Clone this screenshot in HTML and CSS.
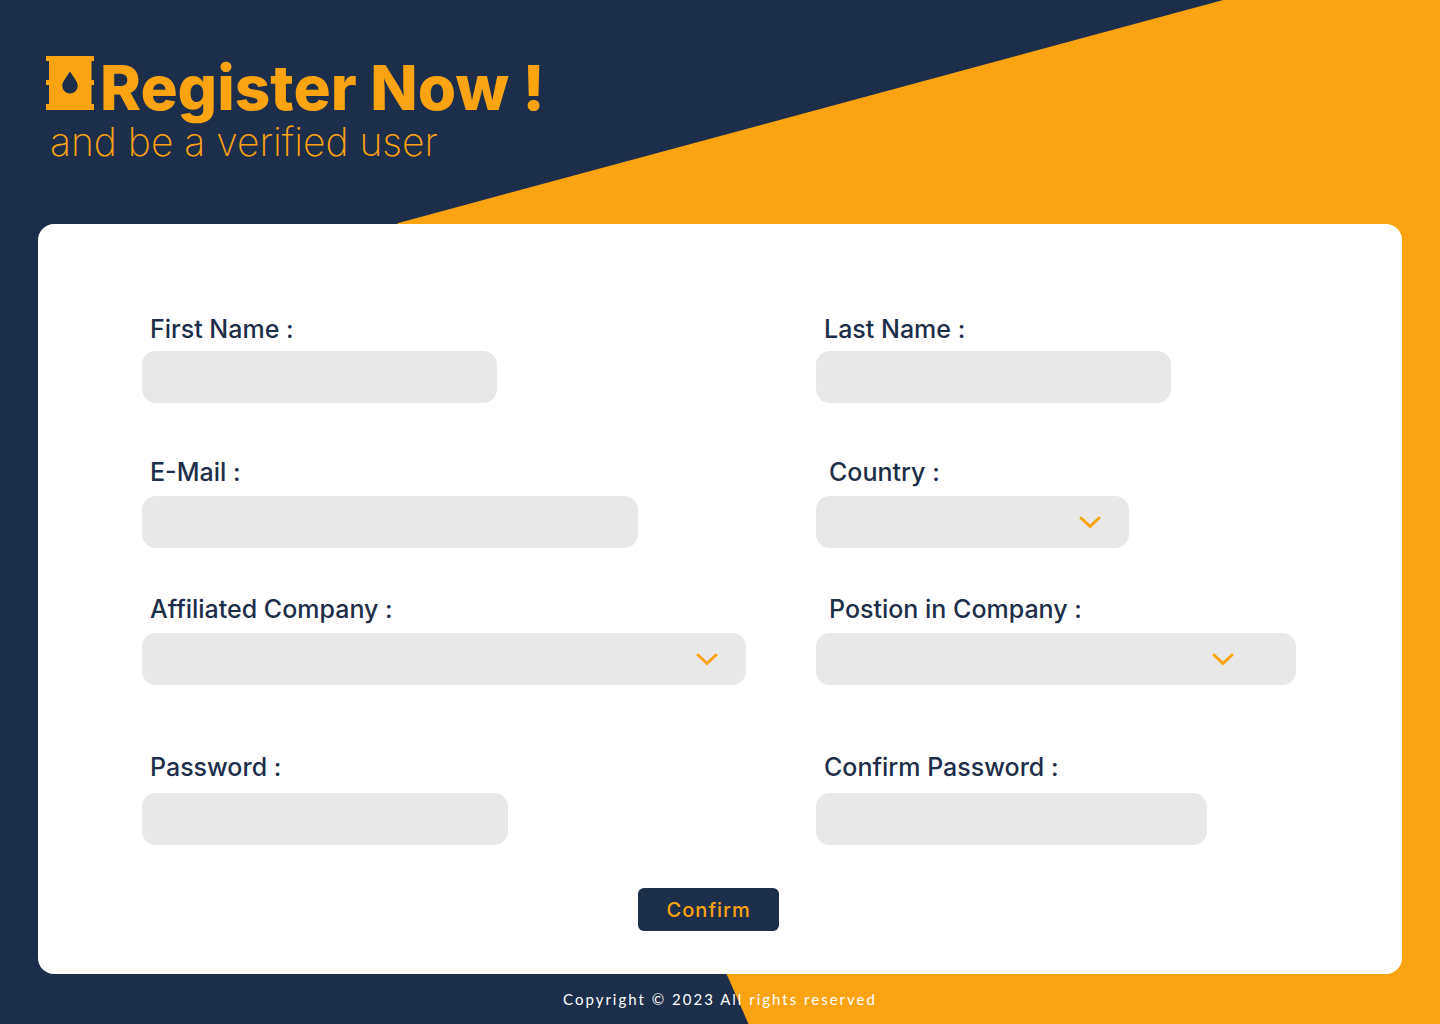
FILE: index.html
```html
<!DOCTYPE html>
<html lang="en">
<head>
  <meta charset="utf-8">
  <meta name="viewport" content="width=device-width, initial-scale=1">
  <title>Register</title>
  <link rel="stylesheet" href="styles.css">
</head>
<body>
  <div class="page">
    <header class="header">
      <div class="brand">
        <svg class="brand-icon" viewBox="0 0 48 54" aria-hidden="true">
          <path fill="currentColor" fill-rule="evenodd" d="M0 0H48V5H45.500V24H48V29H45.500V48H48V54H0V48H3V29H0V24H3V5H0ZM24 15.500C21 20.500 16.300 25.500 16.300 30A7.700 7.400 0 0 0 31.700 30C31.700 25.500 27 20.500 24 15.500Z"/>
        </svg>
        <h1 class="title">Register Now !</h1>
      </div>
      <p class="subtitle">and be a verified user</p>
    </header>

    <main class="card">
      <form class="form">
        <div class="row row-names">
          <div class="field">
            <label class="label" for="first-name">First Name :</label>
            <input class="control w-name" id="first-name" type="text">
          </div>
          <div class="field">
            <label class="label" for="last-name">Last Name :</label>
            <input class="control w-name" id="last-name" type="text">
          </div>
        </div>

        <div class="row row-contact">
          <div class="field">
            <label class="label" for="email">E-Mail :</label>
            <input class="control w-email" id="email" type="email">
          </div>
          <div class="field">
            <label class="label label-inset" for="country">Country :</label>
            <div class="select w-country">
              <select class="control" id="country"><option value=""></option></select>
              <svg class="chevron" viewBox="0 0 22 14" aria-hidden="true"><path d="M2 2L11 10.500L20 2"/></svg>
            </div>
          </div>
        </div>

        <div class="row row-company">
          <div class="field">
            <label class="label" for="company">Affiliated Company :</label>
            <div class="select w-full">
              <select class="control" id="company"><option value=""></option></select>
              <svg class="chevron" viewBox="0 0 22 14" aria-hidden="true"><path d="M2 2L11 10.500L20 2"/></svg>
            </div>
          </div>
          <div class="field">
            <label class="label label-inset" for="position">Postion in Company :</label>
            <div class="select w-full">
              <select class="control" id="position"><option value=""></option></select>
              <svg class="chevron chevron-far" viewBox="0 0 22 14" aria-hidden="true"><path d="M2 2L11 10.500L20 2"/></svg>
            </div>
          </div>
        </div>

        <div class="row row-password">
          <div class="field">
            <label class="label" for="password">Password :</label>
            <input class="control w-password" id="password" type="password">
          </div>
          <div class="field">
            <label class="label" for="confirm-password">Confirm Password :</label>
            <input class="control w-confirm" id="confirm-password" type="password">
          </div>
        </div>

        <button class="submit" type="submit">Confirm</button>
      </form>
    </main>

    <footer class="footer">Copyright © 2023 All rights reserved</footer>
  </div>
</body>
</html>
```
FILE: styles.css
```css
:root {
  --navy: #1d2e4a;
  --orange: #fca311;
  --grey: #e8e8e8;
}

* {
  box-sizing: border-box;
}

body {
  margin: 0;
  font-family: Inter, "Liberation Sans", sans-serif;
  color: var(--navy);
}

.page {
  position: relative;
  isolation: isolate;
  display: flex;
  flex-direction: column;
  min-height: 100vh;
  background: var(--navy);
}

/* Orange wedge behind the card */
.page::before {
  content: "";
  position: absolute;
  inset: 0;
  z-index: -1;
  background: var(--orange);
  clip-path: polygon(84.95% 0, 100% 0, 100% 100%, 51.98% 100%, 27.6% 21.8%);
}

.header {
  min-height: 224px;
  padding: 56px 46px 0;
  color: var(--orange);
}

.brand {
  display: flex;
  align-items: flex-start;
  gap: 6px;
}

.brand-icon {
  flex: none;
  width: 48px;
  height: 54px;
}

.title {
  margin: 0;
  font-size: 62px;
  font-weight: 800;
  line-height: 64px;
}

.subtitle {
  margin: 0;
  padding-left: 4px;
  font-size: 39px;
  font-weight: 200;
  line-height: 44px;
}

.card {
  flex: 1;
  margin: 0 38px;
  padding: 89px 106px 43px 104px;
  background: #fff;
  border-radius: 16px;
}

.row {
  display: grid;
  grid-template-columns: 604fr 480fr;
  column-gap: 70px;
}

.row-contact {
  margin-top: 53px;
}

.row-company {
  margin-top: 45px;
}

.row-password {
  margin-top: 66px;
}

.field {
  display: flex;
  flex-direction: column;
  gap: 8px;
  min-width: 0;
}

.row-names .field {
  gap: 6px;
}

.row-password .field {
  gap: 10px;
}

.label {
  padding-left: 8px;
  font-size: 25px;
  font-weight: 500;
  line-height: 32px;
}

.label-inset {
  padding-left: 13px;
}

.control {
  width: 100%;
  height: 52px;
  padding: 0 16px;
  border: 0;
  border-radius: 14px;
  background: var(--grey);
  color: var(--navy);
  font: inherit;
  font-size: 20px;
  appearance: none;
}

.select {
  position: relative;
}

.w-name { max-width: 355px; }
.w-email { max-width: 496px; }
.w-country { max-width: 313px; }
.w-full { max-width: 100%; }
.w-password { max-width: 366px; }
.w-confirm { max-width: 391px; }

.chevron {
  position: absolute;
  top: 20px;
  right: 28px;
  width: 22px;
  height: 14px;
  fill: none;
  stroke: var(--orange);
  stroke-width: 3;
  stroke-linecap: round;
  pointer-events: none;
}

.chevron-far {
  right: 62px;
}

.submit {
  display: block;
  width: 141px;
  height: 43px;
  margin: 43px 0 0 43%;
  padding: 0;
  border: 0;
  border-radius: 6px;
  background: var(--navy);
  color: var(--orange);
  font: inherit;
  font-size: 20px;
  font-weight: 500;
  letter-spacing: 1px;
}

.footer {
  color: #fff;
  font-family: Lato, sans-serif;
  font-size: 15px;
  line-height: 50px;
  letter-spacing: 2px;
  text-align: center;
}
```
